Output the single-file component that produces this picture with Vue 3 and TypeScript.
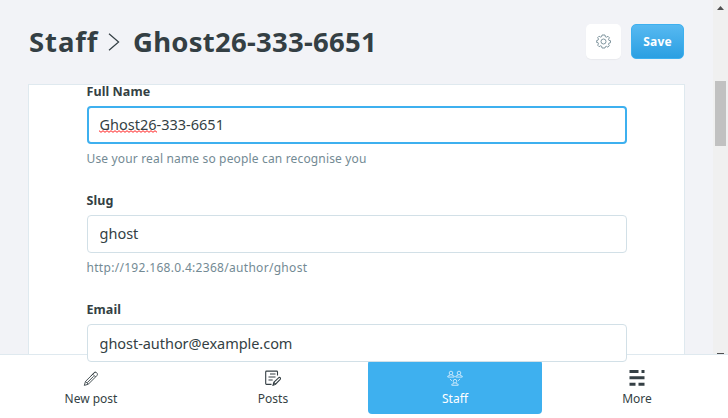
<script setup lang="ts">
import { ref } from 'vue'

interface Field {
  id: string
  label: string
  value: string
  hint?: string
  misspelled?: boolean
}

const fields = ref<Field[]>([
  { id: 'name', label: 'Full Name', value: 'Ghost26-333-6651', hint: 'Use your real name so people can recognise you', misspelled: true },
  { id: 'slug', label: 'Slug', value: 'ghost', hint: 'http://192.168.0.4:2368/author/ghost' },
  { id: 'email', label: 'Email', value: 'ghost-author@example.com' },
])

const squiggle = 'M0 .7' + Array.from({ length: 29 }, (_, i) => ` L${(i + 1) * 2} ${i % 2 ? 0.7 : 2.3}`).join('')
</script>

<template>
  <div class="app">
    <div class="viewport">
      <main class="content">
        <header class="header">
          <h1 class="title">
            <span class="crumb">Staff</span>
            <svg class="chevron" width="12" height="18" viewBox="0 0 12 18"><path d="M1 .8 10.600 9 1 17.200" /></svg>
            <span class="name">Ghost26-333-6651</span>
          </h1>
          <div class="actions">
            <button class="btn settings" aria-label="Settings">
              <svg width="15" height="15" viewBox="0 0 15 15">
                <path d="M6 1h3l.4 1.800 1 .4 1.600-.9 1.400 1.500-.9 1.500.4 1 1.600.4v2l-1.600.5-.4 1 .8 1.500-1.400 1.500-1.500-.9-1 .4L9 14H6l-.4-1.800-1-.4-1.500.9-1.400-1.500.8-1.500-.4-1L.7 8.500v-2l1.400-.4.4-1-.8-1.500L3.100 2.200l1.500.9 1-.4Z" />
                <circle cx="7.500" cy="7.500" r="2.500" />
              </svg>
            </button>
            <button class="btn save">Save</button>
          </div>
        </header>
        <section class="panel">
          <div v-for="field in fields" :key="field.id" class="field" :class="'field-' + field.id">
            <label class="label" :for="field.id">{{ field.label }}</label>
            <div class="control">
              <input :id="field.id" v-model="field.value" class="input" :class="{ focused: field.misspelled }" type="text" spellcheck="false" />
              <svg v-if="field.misspelled" class="squiggle" width="58" height="3" viewBox="0 0 58 3"><path :d="squiggle" /></svg>
            </div>
            <p v-if="field.hint" class="hint">{{ field.hint }}</p>
          </div>
        </section>
      </main>
      <div class="scrollbar">
        <i class="arrow up"></i>
        <i class="thumb"></i>
        <i class="arrow down"></i>
      </div>
    </div>

    <nav class="nav">
      <a class="item new-post">
        <svg width="16" height="16" viewBox="0 0 16 16">
          <path d="m1.300 15.400 1.200-4 8.400-8.300c2.100-2 4.900.6 2.800 2.700l-8.400 8.400ZM2.500 11.400l2.800 2.800M9.800 4.200l2.800 2.800M8 5.900l3.300-3.500 1.200-.5M4.100 12.800l6.500-6.500" />
        </svg>
        <span>New post</span>
      </a>
      <a class="item posts">
        <svg width="16" height="16" viewBox="0 0 16 16">
          <path class="strong" d="M12.500 5.500V1.900q0-.8-.8-.8H1.500q-.8 0-.8.8v11.700q0 .8.8.8h5M5 4h5.500M3.500 7h7M3.500 10h4.200M8 15.300l.8-3 5-4.700q.9-.5 1.500.2t-.1 1.500l-4.700 4.900ZM8.800 12.300l1.700 1.800" />
        </svg>
        <span>Posts</span>
      </a>
      <a class="item staff active">
        <svg width="16" height="16" viewBox="0 0 16 16">
          <g v-for="p in [[4, .7], [12, .7], [8, 8.900]]" :key="p[0]" :transform="`translate(${p[0]} ${p[1]})`">
            <circle cx="0" cy="2.300" r="1.800" />
            <path d="M-1.200 3.800v1L-3.200 5.300v1.100h6.400V5.300L1.200 4.800v-1" />
          </g>
          <path d="M3 8.900l1.800 2M13 8.900l-1.800 2" />
        </svg>
        <span>Staff</span>
      </a>
      <a class="item more">
        <svg width="16" height="16" viewBox="0 0 16 16">
          <path class="solid" d="M.5 0h9v3h-9zM12.500 0h3v3h-3zM.5 6.200h15v3H.5zM.5 12.700h6v3h-6zM9.500 12.700h6v3h-6z" />
        </svg>
        <span>More</span>
      </a>
    </nav>
  </div>
</template>

<style>
body { margin: 0; overflow: hidden; }
</style>

<style scoped>
* { box-sizing: border-box; }
.app {
  width: 728px;
  height: 418px;
  display: grid;
  grid-template-rows: 354px 64px;
  background: #f2f3f7;
  color: #343f44;
  font-family: "Noto Sans", "Open Sans", sans-serif;
}
.viewport { display: grid; grid-template-columns: 1fr 15px; min-height: 0; }
.content { padding: 0 28px; display: grid; grid-template-rows: 84px 270px; }
.header { display: flex; align-items: center; justify-content: space-between; padding: 0 1px 1px; }
.title { display: flex; align-items: center; margin: 0; font-size: 27.500px; line-height: 38px; font-weight: 700; white-space: nowrap; }
.crumb { width: 69px; letter-spacing: .9px; }
.chevron { margin: 1px 13px 0 10px; }
.chevron path { stroke: #343f44; stroke-width: 1.200; }
.name { letter-spacing: .25px; }
svg { display: block; fill: none; flex: none; }
.actions { display: flex; gap: 10px; }
.btn { height: 35px; padding: 0; border: 0; border-radius: 5px; display: grid; place-items: center; font: 700 12px "Noto Sans", sans-serif; }
.settings { width: 35px; background: #fff; box-shadow: 0 1px 1px rgba(0, 0, 0, .04); }
.settings svg { stroke: #738a94; stroke-width: .9; }
.save { width: 53px; color: #fff; background: linear-gradient(#57b9f1, #2b9fe2); border: 1px solid #3eb0ef; letter-spacing: .15px; }
.panel { background: #fff; border: 1px solid #dfe9ef; border-bottom: 0; padding: 0 57px 0 57.500px; }
.field { height: 109px; display: flex; flex-direction: column; }
.label { height: 21px; font-size: 12.500px; line-height: 13px; font-weight: 700; letter-spacing: .08px; }
.control { position: relative; z-index: 1; height: 38px; }
.input {
  display: block;
  width: 100%;
  height: 38px;
  padding: 0 12px;
  border: 1px solid #d2e0e7;
  border-radius: 4px;
  outline: 0;
  background: #fff;
  color: #343f44;
  font: 14.500px "Noto Sans", sans-serif;
}
.focused { border: 2px solid #3eb0ef; padding: 0 11px; }
.field-name .input,
.field-slug .input { padding-bottom: 2px; }
.field-email .input { letter-spacing: -.04px; }
.squiggle { position: absolute; left: 12px; top: 24px; }
.squiggle path { stroke: #f22; stroke-width: 1; }
.hint { margin: 6px 0 0; font-size: 12px; line-height: 18px; color: #738a94; white-space: nowrap; letter-spacing: .16px; }
.field-slug .hint { letter-spacing: .3px; }
.scrollbar { background: #f0f0f0; display: flex; flex-direction: column; align-items: center; overflow: hidden; }
.arrow { width: 7px; height: 4px; background: #505050; flex: none; }
.up { margin-top: 6px; clip-path: polygon(50% 0, 100% 100%, 0 100%); }
.thumb { width: 11px; height: 65px; margin-top: 71px; background: #c1c1c1; }
.down { margin-top: 207px; height: 1px; }
.nav { display: grid; grid-template-columns: repeat(4, 1fr); padding: 5px 0 4px; background: #fff; border-top: 1px solid #dfe9ef; }
.item {
  margin: 0 4px;
  padding-top: 10px;
  display: flex;
  flex-direction: column;
  align-items: center;
  gap: 4px;
  border-radius: 4px;
  font-size: 12px;
  line-height: 18px;
}
.item svg { stroke: #343f44; stroke-width: .9; }
.item .strong { stroke-width: 1.100; }
.item .solid { fill: #343f44; stroke: none; }
.active { background: #3eb0ef; color: #fff; }
.active svg { stroke: #c4e6fb; stroke-width: 1; }
</style>
